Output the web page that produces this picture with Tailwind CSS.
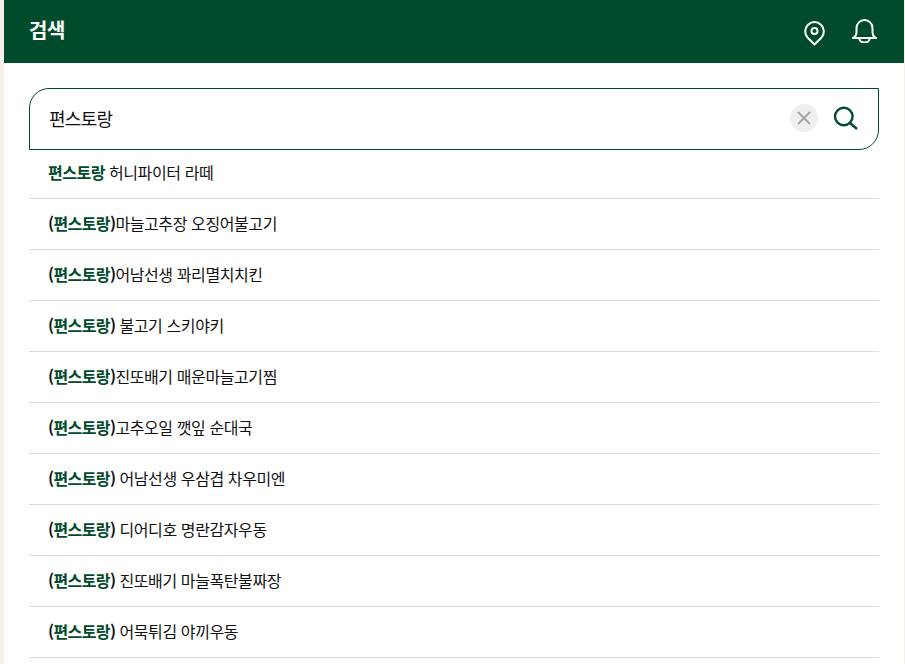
<!DOCTYPE html>
<html lang="ko">
<head>
<meta charset="UTF-8">
<title>검색</title>
<script src="https://cdn.jsdelivr.net/npm/@tailwindcss/browser@4"></script>
</head>
<body class="h-[664px] overflow-hidden bg-[#f5f1ea] font-['Noto_Sans_CJK_KR',sans-serif]">
<div class="ml-[4px] mr-[1px] h-[664px] overflow-hidden bg-white">
  <header class="flex h-[63px] items-center justify-between bg-[#004b2b] pl-[25px] pr-[27px]">
    <h1 class="pb-[3px] text-[20px] font-bold tracking-[-0.5px] text-white">검색</h1>
    <div class="flex items-center gap-[27px]">
      <svg class="mt-[3px]" width="21" height="25" viewBox="0 0 21 25" fill="none" stroke="white" stroke-width="2"><path d="M10.5 23.5l-7-7a9.3 9.3 0 1 1 14 0z" stroke-linejoin="round"/><circle cx="10.5" cy="10" r="3"/></svg>
      <svg class="-mt-[1px]" width="25" height="24" viewBox="0 0 25 24" fill="none" stroke="white" stroke-width="2"><path d="M1 19c2-1 3.5-3 3.5-6V9a8 8 0 0 1 16 0v4c0 3 1.5 5 3.5 6z" stroke-linejoin="round"/><path d="M7.5 20a5 3.5 0 0 0 10 0"/></svg>
    </div>
  </header>
  <main class="px-[25px] pt-[25px]">
    <div class="flex h-[62px] items-center justify-between rounded-tl-[20px] rounded-br-[20px] border border-[#004b2b] pb-[2px] pl-[19px] pr-[20px]">
      <span class="text-[18px] tracking-[-0.7px] text-[#111]">편스토랑</span>
      <div class="flex items-center gap-[15px]">
        <span class="flex h-[28px] w-[28px] items-center justify-center rounded-full bg-[#efefef]">
          <svg width="14" height="14" viewBox="0 0 14 14" stroke="#a5a5a5" stroke-width="1.8"><path d="M1 1l12 12M13 1L1 13"/></svg>
        </span>
        <svg width="25" height="24" viewBox="0 0 25 24" fill="none" stroke="#004b2b" stroke-width="2.4"><circle cx="10.8" cy="10.5" r="8.8"/><path d="M17 17l7 6"/></svg>
      </div>
    </div>
    <ul class="text-[16px] tracking-[-0.4px] text-[#111]">
      <li class="flex h-[49px] items-center border-b border-[#e5d9de] pb-[4px] pl-[19px]"><b class="tracking-[-0.5px] text-[#004b2b]">편스토랑</b>&nbsp;허니파이터 라떼</li>
      <li class="flex h-[51px] items-center border-b border-[#e5d9de] pb-[2px] pl-[19px]"><b class="tracking-[-0.6px] text-[#004b2b]"><span class="text-[#111]">(</span>편스토랑<span class="text-[#111]">)</span></b>마늘고추장 오징어불고기</li>
      <li class="flex h-[51px] items-center border-b border-[#e5d9de] pb-[2px] pl-[19px]"><b class="tracking-[-0.6px] text-[#004b2b]"><span class="text-[#111]">(</span>편스토랑<span class="text-[#111]">)</span></b>어남선생 꽈리멸치치킨</li>
      <li class="flex h-[51px] items-center border-b border-[#e5d9de] pb-[2px] pl-[19px]"><b class="tracking-[-0.6px] text-[#004b2b]"><span class="text-[#111]">(</span>편스토랑<span class="text-[#111]">)</span></b>&nbsp;불고기 스키야키</li>
      <li class="flex h-[51px] items-center border-b border-[#e5d9de] pb-[2px] pl-[19px]"><b class="tracking-[-0.6px] text-[#004b2b]"><span class="text-[#111]">(</span>편스토랑<span class="text-[#111]">)</span></b>진또배기 매운마늘고기찜</li>
      <li class="flex h-[51px] items-center border-b border-[#e5d9de] pb-[2px] pl-[19px]"><b class="tracking-[-0.6px] text-[#004b2b]"><span class="text-[#111]">(</span>편스토랑<span class="text-[#111]">)</span></b>고추오일 깻잎 순대국</li>
      <li class="flex h-[51px] items-center border-b border-[#e5d9de] pb-[2px] pl-[19px]"><b class="tracking-[-0.6px] text-[#004b2b]"><span class="text-[#111]">(</span>편스토랑<span class="text-[#111]">)</span></b>&nbsp;어남선생 우삼겹 차우미엔</li>
      <li class="flex h-[51px] items-center border-b border-[#e5d9de] pb-[2px] pl-[19px]"><b class="tracking-[-0.6px] text-[#004b2b]"><span class="text-[#111]">(</span>편스토랑<span class="text-[#111]">)</span></b>&nbsp;디어디호 명란감자우동</li>
      <li class="flex h-[51px] items-center border-b border-[#e5d9de] pb-[2px] pl-[19px]"><b class="tracking-[-0.6px] text-[#004b2b]"><span class="text-[#111]">(</span>편스토랑<span class="text-[#111]">)</span></b>&nbsp;진또배기 마늘폭탄불짜장</li>
      <li class="flex h-[51px] items-center border-b border-[#e5d9de] pb-[2px] pl-[19px]"><b class="tracking-[-0.6px] text-[#004b2b]"><span class="text-[#111]">(</span>편스토랑<span class="text-[#111]">)</span></b>&nbsp;어묵튀김 야끼우동</li>
    </ul>
  </main>
</div>
</body>
</html>
